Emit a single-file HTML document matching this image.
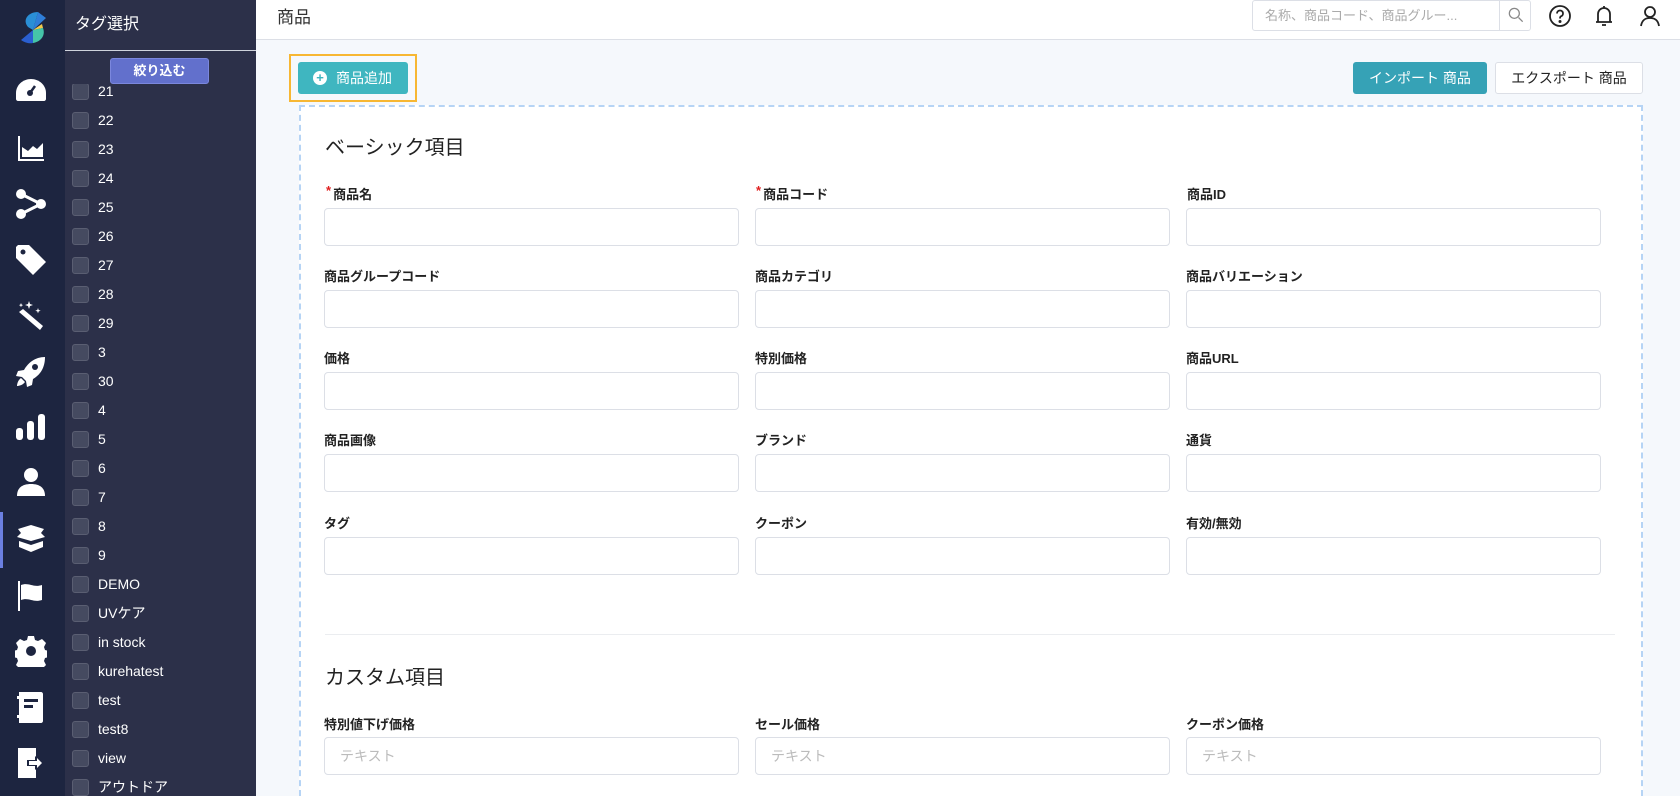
<!DOCTYPE html>
<html style="overflow:hidden"><head><meta charset="utf-8">
<style>
*{box-sizing:border-box;margin:0;padding:0}
html,body{width:1680px;height:796px;overflow:hidden}
body{font-family:"Liberation Sans","Noto Sans CJK JP",sans-serif;background:#f5f8fc;position:relative}
.nav{position:absolute;left:0;top:0;width:65px;height:796px;background:#1d2540}
.nav svg{position:absolute;left:15px;width:32px;height:32px;fill:#fff}
.act{position:absolute;left:0;top:512px;width:3px;height:56px;background:#6b7fe0}
.panel{position:absolute;left:65px;top:0;width:191px;height:796px;background:#2c3049;color:#fff}
.panel h2{position:absolute;left:10px;top:10px;font-size:16px;font-weight:normal}
.panel .div{position:absolute;left:0;top:50px;width:191px;height:1px;background:#cfd3dc}
.filter{position:absolute;left:45px;top:58px;width:99px;height:26px;background:#6270cc;border:1px solid #7b87dd;border-radius:3px;font-size:13px;font-weight:bold;text-align:center;line-height:24px}
.list{position:absolute;left:0;top:84px;width:191px;height:712px;overflow:hidden}
.it{position:absolute;left:7px;height:20px;font-size:14px;line-height:17px}
.it i{position:absolute;left:0;top:0;width:17px;height:17px;border:1px solid #5a5e72;background:#454a60;border-radius:3px}
.it span{position:absolute;left:26px;top:0;white-space:nowrap}
.top{position:absolute;left:256px;top:0;width:1424px;height:40px;background:#fff;border-bottom:1px solid #dcdfe6}
.top .t{position:absolute;left:21px;top:3px;font-size:17px;color:#333}
.search{position:absolute;left:996px;top:0;width:279px;height:31px;border:1px solid #dcdfe6;border-radius:3px;font-size:13px;color:#aaa;line-height:29px;padding-left:12px}
.search b{position:absolute;right:0;top:0;width:31px;height:29px;border-left:1px solid #dcdfe6}
.top svg{position:absolute;top:4px;width:24px;height:24px;fill:none;stroke:#222;stroke-width:1.8}
.addw{position:absolute;left:289px;top:54px;width:128px;height:48px;border:2px solid #f7b733}
.add{position:absolute;left:298px;top:62px;width:110px;height:32px;background:#3fb6c0;border-radius:3px;color:#fff;font-size:14px;line-height:32px;padding-left:38px}
.add:before{content:"+";position:absolute;left:15px;top:9px;width:14px;height:14px;border-radius:50%;background:#fff;color:#3fb6c0;font-size:13px;line-height:14px;text-align:center;font-weight:bold}
.imp{position:absolute;left:1353px;top:62px;width:134px;height:32px;background:#36a2b6;border-radius:3px;color:#fff;font-size:14px;line-height:32px;text-align:center}
.exp{position:absolute;left:1495px;top:62px;width:148px;height:32px;background:#fff;border:1px solid #dcdfe6;border-radius:3px;color:#222;font-size:14px;line-height:30px;text-align:center}
.box{position:absolute;left:299px;top:105px;width:1344px;height:691px;border:2px dashed #b6d4f5;border-bottom:none;background:#fff}
.h{position:absolute;font-size:20px;color:#222}
.lb{position:absolute;font-size:13px;color:#222;font-weight:bold}
.lb em{color:#e02020;font-style:normal;position:relative;top:-4px;margin-right:2px}
.in{position:absolute;width:415px;height:38px;border:1px solid #dcdfe6;border-radius:4px;background:#fff;font-size:14px;color:#bbb;line-height:36px;padding-left:15px}
.sep{position:absolute;left:325px;top:634px;width:1290px;height:1px;background:#ebedf0}
</style></head><body>
<div class="nav">
<svg style="left:16px;top:10px;width:34px;height:34px" viewBox="0 0 34 34"><path d="M22 2 L30 8 L17 20 Z" fill="#2f7ed8"/><path d="M22 2 C12 2 6 10 12 17 L17 20 Z" fill="#2a8fd6"/><path d="M17 20 L26 14 L27 18 Z" fill="#f2c94c"/><path d="M17 20 L27 18 C30 26 24 32 17 33 Z" fill="#45c4a8"/><path d="M17 20 L17 33 C12 34 8 32 5 30 Z" fill="#2a5fd0"/></svg>
<svg style="top:74px" viewBox="0 0 32 32"><path d="M16 5C8 5 1 11 1 19v6c0 1 1 2 2 2h26c1 0 2-1 2-2v-6C31 11 24 5 16 5z"/><circle cx="15" cy="19" r="3" fill="#1d2540"/><path d="M15 19l5-7" stroke="#1d2540" stroke-width="2.5"/></svg>
<svg style="top:132px" viewBox="0 0 32 32"><path d="M3 4h2v23h24v2H3z"/><path d="M7 25V15l6 4 5-5 4 3 6-6v14z"/></svg>
<svg style="top:188px" viewBox="0 0 32 32"><circle cx="6" cy="6" r="5"/><circle cx="26" cy="16" r="5"/><circle cx="6" cy="26" r="5"/><path d="M6 6l20 10L6 26" stroke="#fff" stroke-width="3" fill="none"/></svg>
<svg style="top:244px" viewBox="0 0 32 32"><path d="M1 3v11l17 17 13-13L14 1H3z"/><circle cx="8" cy="8" r="2.5" fill="#1d2540"/></svg>
<svg style="top:300px" viewBox="0 0 32 32"><path d="M4 12l4-3 20 17-3 4z"/><path d="M14 1l1 3 3 1-3 1-1 3-1-3-3-1 3-1zM23 8l.7 2 2 .7-2 .7-.7 2-.7-2-2-.7 2-.7zM6 3l.6 1.5 1.5.6-1.5.6L6 7.2l-.6-1.5-1.5-.6 1.5-.6z"/></svg>
<svg style="top:356px" viewBox="0 0 32 32"><path d="M30 1C20 1 13 7 9 14l-6 1-2 5 6 1 4 4 1 6 5-2 1-6c7-4 12-11 12-22z"/><circle cx="20" cy="11" r="3" fill="#1d2540"/><path d="M6 22c-3 2-4 6-4 8 2 0 6-1 8-4z"/></svg>
<svg style="top:412px" viewBox="0 0 32 32"><rect x="1" y="16" width="7" height="12" rx="3"/><rect x="12" y="9" width="7" height="19" rx="3"/><rect x="23" y="2" width="7" height="26" rx="3"/></svg>
<svg style="top:466px" viewBox="0 0 32 32"><circle cx="16" cy="9" r="7"/><path d="M2 30c0-8 5-12 14-12s14 4 14 12z"/></svg>
<svg style="top:523px" viewBox="0 0 32 32"><path d="M3 6l13-4 13 4-3 4 4 4-14 4-14-4 4-4z"/><path d="M4 18l12 4 12-4v6l-12 5-12-5z"/></svg>
<svg style="top:580px" viewBox="0 0 32 32"><rect x="3" y="1" width="2" height="30"/><path d="M6 5c8-3 12 3 21 0v15c-9 3-13-3-21 0z"/></svg>
<svg style="top:635px" viewBox="0 0 32 32"><path d="M13 1h6l1 4 3 1 4-2 4 4-2 4 1 3 4 1v6l-4 1-1 3 2 4-4 4-4-2-3 1-1 4h-6l-1-4-3-1-4 2-4-4 2-4-1-3-4-1v-6l4-1 1-3-2-4 4-4 4 2 3-1z"/><circle cx="16" cy="16" r="5" fill="#1d2540"/></svg>
<svg style="top:691px" viewBox="0 0 32 32"><path d="M4 1h22c1 0 2 1 2 2v27c0 1-1 2-2 2H4z"/><rect x="2" y="5" width="4" height="3"/><rect x="2" y="24" width="4" height="3"/><rect x="9" y="8" width="14" height="3" fill="#1d2540"/><rect x="9" y="14" width="9" height="3" fill="#1d2540"/></svg>
<svg style="top:747px" viewBox="0 0 32 32"><path d="M3 1h18v30H3z"/><path d="M12 13h8v-4l8 7-8 7v-4h-8z" fill="#1d2540"/><path d="M14 14h8v-3l5 5-5 5v-3h-8z"/></svg>
<div class="act"></div>
</div>
<div class="panel">
<h2>タグ選択</h2><div class="div"></div>
<div class="list">
<div class="it" style="top:-1px"><i></i><span>21</span></div>
<div class="it" style="top:28px"><i></i><span>22</span></div>
<div class="it" style="top:57px"><i></i><span>23</span></div>
<div class="it" style="top:86px"><i></i><span>24</span></div>
<div class="it" style="top:115px"><i></i><span>25</span></div>
<div class="it" style="top:144px"><i></i><span>26</span></div>
<div class="it" style="top:173px"><i></i><span>27</span></div>
<div class="it" style="top:202px"><i></i><span>28</span></div>
<div class="it" style="top:231px"><i></i><span>29</span></div>
<div class="it" style="top:260px"><i></i><span>3</span></div>
<div class="it" style="top:289px"><i></i><span>30</span></div>
<div class="it" style="top:318px"><i></i><span>4</span></div>
<div class="it" style="top:347px"><i></i><span>5</span></div>
<div class="it" style="top:376px"><i></i><span>6</span></div>
<div class="it" style="top:405px"><i></i><span>7</span></div>
<div class="it" style="top:434px"><i></i><span>8</span></div>
<div class="it" style="top:463px"><i></i><span>9</span></div>
<div class="it" style="top:492px"><i></i><span>DEMO</span></div>
<div class="it" style="top:521px"><i></i><span>UVケア</span></div>
<div class="it" style="top:550px"><i></i><span>in stock</span></div>
<div class="it" style="top:579px"><i></i><span>kurehatest</span></div>
<div class="it" style="top:608px"><i></i><span>test</span></div>
<div class="it" style="top:637px"><i></i><span>test8</span></div>
<div class="it" style="top:666px"><i></i><span>view</span></div>
<div class="it" style="top:695px"><i></i><span>アウトドア</span></div>
</div>
<div class="filter">絞り込む</div>
</div>
<div class="top"><div class="t">商品</div>
<div class="search">名称、商品コード、商品グルー...<b><svg style="left:6px;top:4px;width:20px;height:20px;stroke:#888;stroke-width:1.5" viewBox="0 0 24 24"><circle cx="10" cy="10" r="6"/><path d="M15 15l5 5"/></svg></b></div>
<svg style="left:1292px" viewBox="0 0 24 24"><circle cx="12" cy="12" r="10"/><path d="M9 9.5a3 3 0 1 1 4 2.8c-1 .4-1 1-1 2.2"/><circle cx="12" cy="17.5" r=".6" fill="#222"/></svg>
<svg style="left:1336px" viewBox="0 0 24 24"><path d="M6 18V10a6 6 0 0 1 12 0v8zM4 18h16M10 21h4M12 2v2"/></svg>
<svg style="left:1382px" viewBox="0 0 24 24"><circle cx="12" cy="8" r="5"/><path d="M3 22c1-6 4-8 9-8s8 2 9 8"/></svg>
</div>
<div class="addw"></div><div class="add">商品追加</div>
<div class="imp">インポート 商品</div><div class="exp">エクスポート 商品</div>
<div class="box"></div>
<div class="h" style="left:325px;top:131px">ベーシック項目</div>
<div class="lb" style="left:326px;top:184px"><em>*</em>商品名</div>
<div class="lb" style="left:756px;top:184px"><em>*</em>商品コード</div>
<div class="lb" style="left:1187px;top:184px">商品ID</div>
<div class="in" style="left:324px;top:208px"></div><div class="in" style="left:755px;top:208px"></div><div class="in" style="left:1186px;top:208px"></div>
<div class="lb" style="left:324px;top:266px">商品グループコード</div>
<div class="lb" style="left:755px;top:266px">商品カテゴリ</div>
<div class="lb" style="left:1186px;top:266px">商品バリエーション</div>
<div class="in" style="left:324px;top:290px"></div><div class="in" style="left:755px;top:290px"></div><div class="in" style="left:1186px;top:290px"></div>
<div class="lb" style="left:324px;top:348px">価格</div>
<div class="lb" style="left:755px;top:348px">特別価格</div>
<div class="lb" style="left:1186px;top:348px">商品URL</div>
<div class="in" style="left:324px;top:372px"></div><div class="in" style="left:755px;top:372px"></div><div class="in" style="left:1186px;top:372px"></div>
<div class="lb" style="left:324px;top:430px">商品画像</div>
<div class="lb" style="left:755px;top:430px">ブランド</div>
<div class="lb" style="left:1186px;top:430px">通貨</div>
<div class="in" style="left:324px;top:454px"></div><div class="in" style="left:755px;top:454px"></div><div class="in" style="left:1186px;top:454px"></div>
<div class="lb" style="left:324px;top:513px">タグ</div>
<div class="lb" style="left:755px;top:513px">クーポン</div>
<div class="lb" style="left:1186px;top:513px">有効/無効</div>
<div class="in" style="left:324px;top:537px"></div><div class="in" style="left:755px;top:537px"></div><div class="in" style="left:1186px;top:537px"></div>
<div class="sep"></div>
<div class="h" style="left:325px;top:661px">カスタム項目</div>
<div class="lb" style="left:324px;top:714px">特別値下げ価格</div>
<div class="lb" style="left:755px;top:714px">セール価格</div>
<div class="lb" style="left:1186px;top:714px">クーポン価格</div>
<div class="in" style="left:324px;top:737px">テキスト</div><div class="in" style="left:755px;top:737px">テキスト</div><div class="in" style="left:1186px;top:737px">テキスト</div>
</body></html>
